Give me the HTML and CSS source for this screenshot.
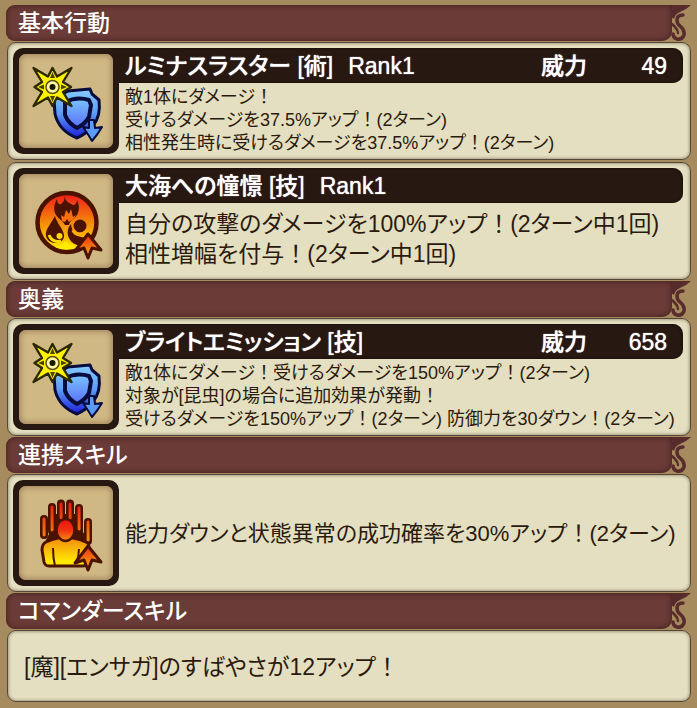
FILE: index.html
```html
<!DOCTYPE html>
<html lang="ja">
<head>
  <meta charset="UTF-8" />
  <title>スキル詳細</title>
  <meta name="viewport" content="width=device-width, initial-scale=1">
  <link rel="stylesheet" href="styles.css">
</head>
<body>
  <!-- shared icon shapes -->
  <svg class="defs" width="0" height="0" aria-hidden="true">
    <defs>
      <linearGradient id="fire" x1="0" y1="0" x2="0" y2="1">
        <stop offset="0" stop-color="#f01818" />
        <stop offset="0.5" stop-color="#f58a0c" />
        <stop offset="1" stop-color="#fff000" />
      </linearGradient>
      <linearGradient id="fireBody" gradientUnits="userSpaceOnUse" x1="0" y1="14" x2="0" y2="82">
        <stop offset="0" stop-color="#f01010" />
        <stop offset="0.5" stop-color="#f07a10" />
        <stop offset="0.9" stop-color="#ffe800" />
      </linearGradient>
      <linearGradient id="head" x1="0" y1="0" x2="0" y2="1">
        <stop offset="0" stop-color="#f01010" />
        <stop offset="0.5" stop-color="#f03010" />
        <stop offset="1" stop-color="#f59010" />
      </linearGradient>
      <linearGradient id="arrowUp" x1="0" y1="0" x2="0" y2="1">
        <stop offset="0" stop-color="#f02818" />
        <stop offset="0.6" stop-color="#f58010" />
        <stop offset="1" stop-color="#ffb400" />
      </linearGradient>
      <linearGradient id="water" x1="0" y1="0" x2="0" y2="1">
        <stop offset="0" stop-color="#86ccff" />
        <stop offset="0.5" stop-color="#5c9cf4" />
        <stop offset="1" stop-color="#1c1cd8" />
      </linearGradient>
      <linearGradient id="waterIn" x1="0" y1="0" x2="0" y2="1">
        <stop offset="0" stop-color="#78c4ff" />
        <stop offset="1" stop-color="#5a70f8" />
      </linearGradient>

      <symbol id="sunShield" viewBox="0 0 94 94">
        <g stroke="#080c3c" stroke-width="3" stroke-linejoin="round">
          <path d="M49 37 L71 35 L73 40 L80 46 Q82 62 74 72 Q67 80 58 84 Q40 77 36 60 L35 45 Z" fill="url(#water)" />
          <path d="M46 48 Q58 42 70 46 L72 51 L70 63 Q66 70 58 74 Q49 69 46 61 Z" fill="url(#waterIn)" stroke-width="4" />
          <path d="M70 66 L70 74 L64 73 Q69 80 73 87 Q79 80 83 73 L76 74 L75 66 Z" fill="#5b9cf8" stroke-width="2" />
        </g>
        <path d="M52.500 14 L44 28 L52 33 L44 38 L52.500 52 L38 43.500 L33.500 52 L29 43.500 L14.500 52 L23 38 L15.500 33 L23 28 L14.500 14 L29 22.500 L33.500 14 L38 22.500 Z" fill="#fff200" stroke="#2c2800" stroke-width="2.400" stroke-linejoin="round" />
        <g fill="#4a4400">
          <path d="M33.500 18 L36 24 H31 Z M33.500 48 L36 42 H31 Z M19 33 L25 30.500 V35.500 Z M48 33 L42 30.500 V35.500 Z" />
        </g>
        <circle cx="33.500" cy="33" r="6.500" fill="#fff9a8" stroke="#5a5200" stroke-width="1.500" />
        <circle cx="33.500" cy="33" r="3" fill="#1c1800" />
      </symbol>

      <symbol id="upArrow" viewBox="0 0 94 94">
        <path d="M69 60 L82 76 L73 74 L69 84 L65 74 L56 77 Z" fill="url(#arrowUp)" stroke="#4c1200" stroke-width="3" stroke-linejoin="round" />
      </symbol>

      <symbol id="elements" viewBox="0 0 94 94">
        <circle cx="48" cy="48.500" r="29.500" fill="url(#fire)" stroke="#4c1200" stroke-width="4.500" />
        <g fill="#4c1200">
          <path d="M45 22 C47 28 50 29 54 31 C56 31 58 29 58 26 C61 32 60 38 58 41 C55 46 51 46 50 51 H46 C44 47 40 45 37 41 C34 36 35 30 38 25 C38 29 40 31 42 30 C45 28 46 25 45 22 Z" />
          <path d="M36 42 C32 50 26 55 27 62 C29 72 46 71 45 61 C44 54 38 50 36 42 Z" />
          <circle cx="61" cy="52" r="6.500" />
          <path d="M52 50 C46 56 48 68 58 71 C65 73 70 68 71 62 C65 66 53 62 52 50 Z" />
        </g>
        <path d="M43 47 L42 41 L45 43 L47 36 L50 40 L52 35 L54 43 L57 41 Q55 46 50 48 L48 45 L46 48 Z" fill="#f57010" />
        <path d="M36 73 Q43 71 47 67 Q51 72 58 73 Q47 78 36 73 Z" fill="#ffec00" />
        <path d="M30 61 Q33 69 42 67" fill="none" stroke="#ffdc00" stroke-width="3" />
        <circle cx="40.500" cy="62" r="3" fill="#ffdc00" />
        <path d="M54 56 Q58 64 67 58" fill="none" stroke="#ffac08" stroke-width="3.500" />
        <use href="#upArrow" width="94" height="94" />
      </symbol>

      <symbol id="handsBody" viewBox="0 0 94 94">
        <path d="M30 28 H64 V46 L70 56 H26 L30 48 Z" fill="#4c1200" />
        <path d="M25 33 V49 M33 21 V45 M42 17.500 V45 M51 17.500 V45 M60 22 V45 M69 36 V55" stroke="#4c1200" stroke-width="8" stroke-linecap="round" />
        <path d="M25 33 L25.100 49 M33 21 L33.100 44 M42 18 L42.100 32 M51 18 L51.100 32 M60 22 L60.100 43 M69 36 L69.100 54" stroke="url(#fireBody)" stroke-width="3" stroke-linecap="round" />
        <path d="M27 56 Q33 53 39 52 H54 Q62 53 69 57 L73 72 Q72 79 64 80 H30 Q26 80 25 76 L23 64 Q23 58 27 56 Z" fill="url(#fireBody)" stroke="#4c1200" stroke-width="3" />
        <path d="M34 62 Q34 72 36 80 M60 63 Q60 70 57 78" fill="none" stroke="#4c1200" stroke-width="2" />
        <ellipse cx="46.500" cy="44" rx="9" ry="11" fill="url(#head)" stroke="#4c1200" stroke-width="2.500" />
        <use href="#upArrow" width="94" height="94" />
      </symbol>

      <symbol id="flourish" viewBox="0 0 32 36">
        <path d="M13 0 H32 Q27 5 21 7 Q16 9 15 14 L12 12 Z" fill="#582c2d" />
        <g fill="none" stroke="#582c2d" stroke-linecap="round">
          <path d="M24 10 Q18 10 18 15 Q18 19 21 21 Q26 25 25 30 Q23 35 18 34 Q14 33 14 29" stroke-width="3.500" />
          <path d="M19 28 Q19 25 16 22 L13 19" stroke-width="2.500" />
        </g>
      </symbol>
    </defs>
  </svg>

  <main class="skills">
    <h2 class="heading">
      <span class="heading-label">基本行動</span>
      <svg class="flourish" aria-hidden="true"><use href="#flourish" /></svg>
    </h2>
    <section class="card">
      <div class="icon"><svg aria-hidden="true"><use href="#sunShield" /></svg></div>
      <div class="detail">
        <h3 class="title">
          <span class="name">ルミナスラスター [術]</span>
          <span class="rank">Rank1</span>
          <span class="power">威力</span>
          <span class="value">49</span>
        </h3>
        <p class="text small">敵1体にダメージ<span class="mark">！</span><br>受けるダメージを37.5%アップ<span class="mark">！</span>(2ターン)<br>相性発生時に受けるダメージを37.5%アップ<span class="mark">！</span>(2ターン)</p>
      </div>
    </section>
    <section class="card">
      <div class="icon"><svg aria-hidden="true"><use href="#elements" /></svg></div>
      <div class="detail">
        <h3 class="title">
          <span class="name">大海への憧憬 [技]</span>
          <span class="rank">Rank1</span>
        </h3>
        <p class="text large">自分の攻撃のダメージを100%アップ<span class="mark">！</span>(2ターン中1回)<br>相性増幅を付与<span class="mark">！</span>(2ターン中1回)</p>
      </div>
    </section>

    <h2 class="heading">
      <span class="heading-label">奥義</span>
      <svg class="flourish" aria-hidden="true"><use href="#flourish" /></svg>
    </h2>
    <section class="card">
      <div class="icon"><svg aria-hidden="true"><use href="#sunShield" /></svg></div>
      <div class="detail">
        <h3 class="title">
          <span class="name">ブライトエミッション [技]</span>
          <span class="power">威力</span>
          <span class="value">658</span>
        </h3>
        <p class="text small">敵1体にダメージ<span class="mark">！</span>受けるダメージを150%アップ<span class="mark">！</span>(2ターン)<br>対象が[昆虫]の場合に追加効果が発動<span class="mark">！</span><br>受けるダメージを150%アップ<span class="mark">！</span>(2ターン) 防御力を30ダウン<span class="mark">！</span>(2ターン)</p>
      </div>
    </section>

    <h2 class="heading">
      <span class="heading-label">連携スキル</span>
      <svg class="flourish" aria-hidden="true"><use href="#flourish" /></svg>
    </h2>
    <section class="card">
      <div class="icon"><svg aria-hidden="true"><use href="#handsBody" /></svg></div>
      <div class="detail centered">
        <p class="text medium">能力ダウンと状態異常の成功確率を30%アップ<span class="mark">！</span>(2ターン)</p>
      </div>
    </section>

    <h2 class="heading">
      <span class="heading-label">コマンダースキル</span>
      <svg class="flourish" aria-hidden="true"><use href="#flourish" /></svg>
    </h2>
    <section class="card commander">
      <p class="text large">[魔][エンサガ]のすばやさが12アップ<span class="mark">！</span></p>
    </section>
  </main>
</body>
</html>
```
FILE: styles.css
```css
* {
  box-sizing: border-box;
}
body {
  margin: 0;
  padding: 5px 6px 6px;
  background: #a58b5e;
  font-family: "Liberation Sans", "Noto Sans CJK JP", sans-serif;
  font-feature-settings: "palt";
  color: #2b1a0e;
}
h2, h3, p {
  margin: 0;
  font-weight: 500;
}
.defs {
  position: absolute;
}
.skills {
  display: flex;
  flex-direction: column;
  gap: 1px;
}
.heading {
  display: flex;
  height: 36px;
  font-size: 23px;
  line-height: 36px;
  color: #fff;
}
.heading-label {
  flex: 1;
  padding-left: 12px;
  background: #6a3b37;
  border-radius: 9px 0 10px 9px;
  box-shadow: inset 0 0 5px 1px #4a2425;
}
.flourish {
  width: 32px;
  height: 36px;
  margin-left: -13px;
}
.card {
  display: flex;
  min-height: 118px;
  margin-left: 1px;
  padding: 5px 7px 4px 5px;
  background: #e4dfc0;
  border: 1px solid #54463a;
  border-radius: 9px;
  box-shadow: inset 0 0 3px 1px #a79d80;
}
.card + .card {
  margin-top: 1px;
}
.icon {
  position: relative;
  width: 106px;
  height: 106px;
  padding: 6px;
  background: #281812;
  border-radius: 10px;
}
.icon svg {
  display: block;
  width: 94px;
  height: 94px;
  background: #cfb883;
  border-radius: 7px;
  box-shadow: inset 0 0 5px 2px #a98a64;
}
.detail {
  flex: 1;
}
/* the bar runs under the icon so the rounded corners join */
.title {
  display: flex;
  height: 35px;
  margin-left: -10px;
  padding: 0 16px;
  background: #281812;
  border-radius: 0 10px 10px 0;
  box-shadow: inset 0 0 3px #120806;
  font-size: 23px;
  line-height: 36px;
  color: #fff;
  text-shadow: 0 0 1px #fff;
}
.rank {
  margin-left: 15px;
}
.power {
  margin-left: auto;
}
.value {
  width: 80px;
  text-align: right;
}
.text {
  padding-left: 6px;
  font-weight: 400;
  white-space: nowrap;
}
.mark {
  font-feature-settings: normal;
}
.small {
  padding-top: 3px;
  font-size: 18px;
  line-height: 23px;
}
.medium {
  font-size: 22px;
  line-height: 30px;
}
.large {
  padding-top: 6px;
  font-size: 23px;
  line-height: 30px;
}
.centered {
  display: flex;
  align-items: center;
}
.commander {
  min-height: 72px;
  align-items: center;
  padding-left: 10px;
}
.commander .text {
  padding-top: 0;
}
```
